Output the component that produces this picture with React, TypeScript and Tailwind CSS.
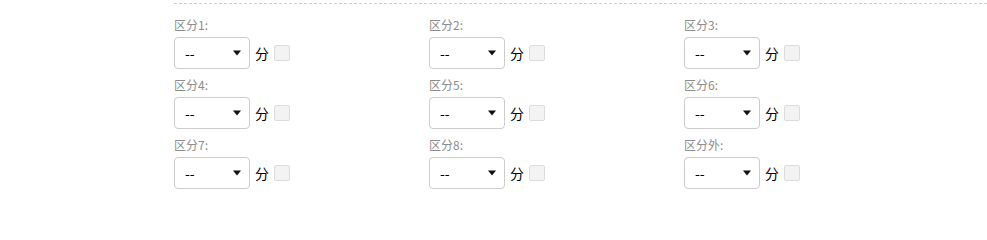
import React from "react";

const labels = ["区分1:", "区分2:", "区分3:", "区分4:", "区分5:", "区分6:", "区分7:", "区分8:", "区分外:"];

function Cell({ label }: { label: string }) {
  return (
    <div className="flex flex-col">
      <div className="h-[20px] text-[12px] leading-[20px] text-[#8c8c8c]">{label}</div>
      <div className="mt-[2px] flex items-center">
        <div className="flex h-[32px] w-[76px] items-center justify-between rounded-[4px] border border-[#ccc] bg-white pl-[10px] pr-[6px]">
          <span className="text-[14px] leading-none text-black">--</span>
          <svg width="10" height="6" viewBox="0 0 10 6" className="mr-[1px]">
            <path d="M1 0.5 L9 0.5 L5 5.5 Z" fill="#111" />
          </svg>
        </div>
        <span className="ml-[5px] text-[14px] text-black">分</span>
        <span className="ml-[5px] h-[16px] w-[16px] rounded-[2px] border border-[#dcdcdc] bg-[#f3f3f3]" />
      </div>
    </div>
  );
}

export default function App() {
  return (
    <div
      className="w-[987px] bg-white pl-[174px] pt-[3px]"
      style={{ fontFamily: '"Noto Sans CJK SC", "Noto Sans", sans-serif' }}
    >
      <div className="border-t border-dashed border-[#ccc] pt-[11px]">
        <div className="grid grid-cols-[255px_255px_255px] gap-y-[6px]">
          {labels.map((l) => (
            <Cell key={l} label={l} />
          ))}
        </div>
      </div>
    </div>
  );
}
